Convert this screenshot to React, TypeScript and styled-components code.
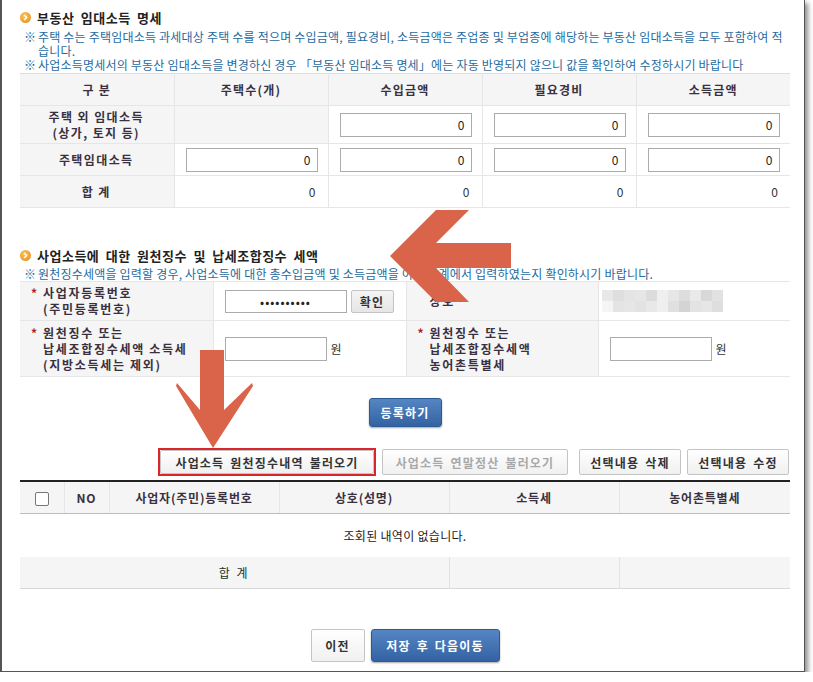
import { FC } from "react";
import styled, { createGlobalStyle } from "styled-components";

const GlobalStyle = createGlobalStyle`
  body {
    margin: 0;
    background: #ffffff;
    font-family: "Noto Sans CJK KR", "Noto Sans", sans-serif;
    font-size: 12px;
    color: #333;
  }
`;

const Window = styled.div`
  position: relative;
  width: 770px;
  height: 671px;
  padding: 0 14px 0 18px;
  background: #fff;
  border: 1px solid #555;
  border-left-width: 2px;
  border-top: none;
  box-shadow: 3px 3px 5px rgba(0, 0, 0, 0.45);
`;

const Section = styled.section<{ top: number }>`
  padding-top: ${(p) => p.top}px;
`;

const Title = styled.h3`
  display: flex;
  align-items: center;
  gap: 6px;
  margin: 0;
  height: 18px;
  font-size: 13px;
  font-weight: 700;
  color: #222;
  letter-spacing: 0.5px;
  word-spacing: 3px;
`;

const Bullet = styled.span`
  display: inline-flex;
  align-items: center;
  justify-content: center;
  width: 11px;
  height: 11px;
  border-radius: 50%;
  background: radial-gradient(circle at 40% 35%, #ffc35a, #e8870f);
`;

const Notes = styled.div<{ top?: number }>`
  margin-top: ${(p) => p.top ?? 4}px;
  padding-left: 4px;
`;

const Note = styled.p`
  display: flex;
  margin: 0;
  font-size: 12px;
  line-height: 14px;
  color: #1f6a9e;
  letter-spacing: 0.2px;
  word-break: break-all;
`;

const Mark = styled.span`
  flex: none;
  width: 14px;
  letter-spacing: 0;
`;

const Grid = styled.table<{ top?: number }>`
  width: 770px;
  margin-top: ${(p) => p.top ?? 0}px;
  border-collapse: collapse;
  table-layout: fixed;
  border-top: 1px solid #dcdcdc;
  border-bottom: 1px solid #c8c8c8;
`;

const Th = styled.th`
  height: 31px;
  padding: 0;
  background: #f5f5f5;
  border: 1px solid #e6e6e6;
  border-top: none;
  font-size: 12px;
  font-weight: 700;
  line-height: 15px;
  color: #3a3040;
  letter-spacing: 1.2px;
  &:first-child { border-left: none; }
  &:last-child { border-right: none; }
`;

const Td = styled.td<{ gray?: boolean; h?: number; align?: string }>`
  height: ${(p) => p.h ?? 31}px;
  padding: 0 12px 0 11px;
  background: ${(p) => (p.gray ? "#f5f5f5" : "#fff")};
  border: 1px solid #e6e6e6;
  text-align: ${(p) => p.align ?? "center"};
  vertical-align: middle;
  font-size: 12px;
  line-height: 15px;
  &:first-child { border-left: none; }
  &:last-child { border-right: none; }
`;

const RowLabel = styled.span`
  font-weight: 700;
  color: #3a3040;
  letter-spacing: 1.4px;
  line-height: 16px;
`;

const NumInput = styled.input<{ w: number; h?: number }>`
  box-sizing: border-box;
  width: ${(p) => p.w}px;
  height: ${(p) => p.h ?? 24}px;
  padding: 0 6px;
  border: 1px solid #ababab;
  font-family: inherit;
  font-size: 12px;
  text-align: right;
  color: #222;
  outline: none;
`;

const SsnInput = styled(NumInput)`
  text-align: center;
  letter-spacing: 1px;
`;

const FormLabel = styled.div`
  display: flex;
  gap: 5px;
  font-weight: 700;
  color: #3a3040;
  line-height: 16px;
  letter-spacing: 1.7px;
  text-align: left;
`;

const Star = styled.span<{ $hidden?: boolean }>`
  flex: none;
  width: 7px;
  color: #b0202a;
  visibility: ${(p) => (p.$hidden ? "hidden" : "visible")};
`;

const InputRow = styled.div`
  display: flex;
  align-items: center;
  gap: 4px;
  color: #333;
`;

const Blur = styled.div`
  margin-left: -8px;
  display: flex;
`;

const Button = styled.button<{ w: number; h?: number }>`
  box-sizing: border-box;
  width: ${(p) => p.w}px;
  height: ${(p) => p.h ?? 26}px;
  padding: 0;
  border: 1px solid #c4c4c4;
  border-radius: 2px;
  background: linear-gradient(#ffffff, #f0f0f0);
  font-family: inherit;
  font-size: 12px;
  font-weight: 700;
  color: ${(p) => (p.disabled ? "#a8a8a8" : "#333")};
  letter-spacing: 1.2px;
  word-spacing: 2px;
  white-space: nowrap;
  cursor: pointer;
`;

const BlueButton = styled.button<{ w: number; h: number }>`
  box-sizing: border-box;
  width: ${(p) => p.w}px;
  height: ${(p) => p.h}px;
  border: 1px solid #2c5a93;
  border-radius: 3px;
  background: linear-gradient(#5685c4, #3463a3);
  box-shadow: 0 1px 2px rgba(0, 0, 0, 0.35);
  font-family: inherit;
  font-size: 12px;
  font-weight: 700;
  color: #fff;
  letter-spacing: 1.2px;
  word-spacing: 2px;
  cursor: pointer;
`;

const SmallButton = styled(Button)`
  background: linear-gradient(#f4f4f4, #e6e6e6);
`;

const Highlight = styled.span`
  display: inline-flex;
  border: 2px solid #d9262c;
`;

const Center = styled.div<{ top: number }>`
  display: flex;
  justify-content: center;
  gap: 6px;
  padding-top: ${(p) => p.top}px;
`;

const Toolbar = styled.div`
  display: flex;
  justify-content: flex-end;
  align-items: center;
  gap: 6px;
  padding: 21px 1px 0 0;
  height: 28px;
  & > :nth-child(3) { margin-left: 5px; }
`;

const ListTable = styled(Grid)`
  border-top: 2px solid #222;
  border-bottom: 1px solid #d8d8d8;
`;

const ListTh = styled(Th)`
  border-bottom: 1px solid #bdbdbd;
  letter-spacing: 0.8px;
`;

const Checkbox = styled.span`
  display: inline-block;
  width: 12px;
  height: 12px;
  border: 1px solid #777;
  border-radius: 2px;
  background: #fff;
  vertical-align: middle;
`;

const Empty = styled.td`
  height: 43px;
  padding: 0;
  text-align: center;
  font-size: 12px;
  line-height: 15px;
  color: #222;
  letter-spacing: 0.3px;
`;

const TotalTd = styled.td`
  height: 31px;
  padding: 0;
  background: #f5f5f5;
  border-left: 1px solid #e2e2e2;
  text-align: center;
  line-height: 15px;
  color: #223322;
  letter-spacing: 2px;
  &:first-child { border-left: none; }
`;

const Overlay = styled.svg`
  position: absolute;
  left: -2px;
  top: 0;
  pointer-events: none;
`;

const blurCells = [
  "#e8e8e8", "#dedede", "#e4e4e4", "#e6e6e6", "#dcdcdc", "#efefef", "#e6e6e6", "#dddddd", "#e9e9e9", "#d8d8d8", "#e2e2e2",
  "#f5f5f5", "#e4e4e4", "#e6e6e6", "#e2e2e2", "#e8e8e8", "#efefef", "#e0e0e0", "#d4d4d4", "#e3e3e3", "#e6e6e6", "#dedede",
];

const BlurredName: FC = () => (
  <svg width="121" height="22" viewBox="0 0 121 22">
    {blurCells.map((c, i) => (
      <rect key={i} x={(i % 11) * 11} y={Math.floor(i / 11) * 11} width="11" height="11" fill={c} />
    ))}
  </svg>
);

const Chevron: FC = () => (
  <svg width="11" height="11" viewBox="0 0 11 11">
    <path d="M4.2 3 L6.6 5.5 L4.2 8" fill="none" stroke="#fff" strokeWidth="1.6" />
  </svg>
);

const App: FC = () => {
  return (
    <>
      <GlobalStyle />
      <Window>
        <Section top={8}>
          <Title>
            <Bullet>
              <Chevron />
            </Bullet>
            부동산 임대소득 명세
          </Title>
          <Notes>
            <Note>
              <Mark>※</Mark>
              <span>
                주택 수는 주택임대소득 과세대상 주택 수를 적으며 수입금액, 필요경비, 소득금액은 주업종 및
                부업종에 해당하는 부동산 임대소득을 모두 포함하여 적습니다.
              </span>
            </Note>
            <Note>
              <Mark>※</Mark>
              <span>
                사업소득명세서의 부동산 임대소득을 변경하신 경우 「부동산 임대소득 명세」에는 자동 반영되지
                않으니 값을 확인하여 수정하시기 바랍니다
              </span>
            </Note>
          </Notes>
          <Grid top={1}>
            <thead>
              <tr>
                <Th>구 분</Th>
                <Th>주택수(개)</Th>
                <Th>수입금액</Th>
                <Th>필요경비</Th>
                <Th>소득금액</Th>
              </tr>
            </thead>
            <tbody>
              <tr>
                <Td gray h={37}>
                  <RowLabel>
                    주택 외 임대소득
                    <br />
                    (상가, 토지 등)
                  </RowLabel>
                </Td>
                <Td gray h={37} />
                <Td h={37}><NumInput w={132} defaultValue="0" /></Td>
                <Td h={37}><NumInput w={132} defaultValue="0" /></Td>
                <Td h={37}><NumInput w={132} defaultValue="0" /></Td>
              </tr>
              <tr>
                <Td gray><RowLabel>주택임대소득</RowLabel></Td>
                <Td><NumInput w={132} defaultValue="0" /></Td>
                <Td><NumInput w={132} defaultValue="0" /></Td>
                <Td><NumInput w={132} defaultValue="0" /></Td>
                <Td><NumInput w={132} defaultValue="0" /></Td>
              </tr>
              <tr>
                <Td gray><RowLabel>합 계</RowLabel></Td>
                <Td align="right">0</Td>
                <Td align="right">0</Td>
                <Td align="right">0</Td>
                <Td align="right">0</Td>
              </tr>
            </tbody>
          </Grid>
        </Section>

        <Section top={38}>
          <Title>
            <Bullet>
              <Chevron />
            </Bullet>
            사업소득에 대한 원천징수 및 납세조합징수 세액
          </Title>
          <Notes top={3}>
            <Note>
              <Mark>※</Mark>
              <span>
                원천징수세액을 입력할 경우, 사업소득에 대한 총수입금액 및 소득금액을 이전 단계에서 입력하였는지
                확인하시기 바랍니다.
              </span>
            </Note>
          </Notes>
          <Grid>
            <colgroup>
              <col style={{ width: 193 }} />
              <col style={{ width: 193 }} />
              <col style={{ width: 192 }} />
              <col style={{ width: 192 }} />
            </colgroup>
            <tbody>
              <tr>
                <Td gray h={38}>
                  <FormLabel>
                    <Star>*</Star>
                    <span>
                      사업자등록번호
                      <br />
                      (주민등록번호)
                    </span>
                  </FormLabel>
                </Td>
                <Td h={38}>
                  <InputRow>
                    <SsnInput w={122} h={23} type="password" defaultValue="1234567890" />
                    <SmallButton w={47} h={23}>확인</SmallButton>
                  </InputRow>
                </Td>
                <Td gray h={38}>
                  <FormLabel>
                    <Star $hidden>*</Star>
                    <span>상호</span>
                  </FormLabel>
                </Td>
                <Td h={38} align="left">
                  <Blur>
                    <BlurredName />
                  </Blur>
                </Td>
              </tr>
              <tr>
                <Td gray h={55}>
                  <FormLabel>
                    <Star>*</Star>
                    <span>
                      원천징수 또는
                      <br />
                      납세조합징수세액 소득세
                      <br />
                      (지방소득세는 제외)
                    </span>
                  </FormLabel>
                </Td>
                <Td h={55}>
                  <InputRow>
                    <NumInput w={102} />원
                  </InputRow>
                </Td>
                <Td gray h={55}>
                  <FormLabel>
                    <Star>*</Star>
                    <span>
                      원천징수 또는
                      <br />
                      납세조합징수세액
                      <br />
                      농어촌특별세
                    </span>
                  </FormLabel>
                </Td>
                <Td h={55}>
                  <InputRow>
                    <NumInput w={102} />원
                  </InputRow>
                </Td>
              </tr>
            </tbody>
          </Grid>
        </Section>

        <Center top={21}>
          <BlueButton w={73} h={29}>등록하기</BlueButton>
        </Center>

        <Toolbar>
          <Highlight>
            <Button w={214} h={24}>사업소득 원천징수내역 불러오기</Button>
          </Highlight>
          <Button w={186} disabled>사업소득 연말정산 불러오기</Button>
          <Button w={102}>선택내용 삭제</Button>
          <Button w={102}>선택내용 수정</Button>
        </Toolbar>

        <ListTable top={4}>
          <colgroup>
            <col style={{ width: 44 }} />
            <col style={{ width: 45 }} />
            <col style={{ width: 170 }} />
            <col style={{ width: 170 }} />
            <col style={{ width: 170 }} />
            <col style={{ width: 171 }} />
          </colgroup>
          <thead>
            <tr>
              <ListTh><Checkbox /></ListTh>
              <ListTh>NO</ListTh>
              <ListTh>사업자(주민)등록번호</ListTh>
              <ListTh>상호(성명)</ListTh>
              <ListTh>소득세</ListTh>
              <ListTh>농어촌특별세</ListTh>
            </tr>
          </thead>
          <tbody>
            <tr>
              <Empty colSpan={6}>조회된 내역이 없습니다.</Empty>
            </tr>
            <tr>
              <TotalTd colSpan={4}>합 계</TotalTd>
              <TotalTd />
              <TotalTd />
            </tr>
          </tbody>
        </ListTable>

        <Center top={40}>
          <Button w={54} h={33}>이전</Button>
          <BlueButton w={129} h={33}>저장 후 다음이동</BlueButton>
        </Center>

        <Overlay width="813" height="682" viewBox="0 0 813 682">
          <polygon
            fill="#d9644a"
            points="390,256 436,210 469,210 436,243 511,243 511,268 436,268 469,302 436,302"
          />
          <polygon
            fill="#d9644a"
            points="200,350 224,350 224,410 252,383 253,386 213,448 176,386 177,383 200,410"
          />
        </Overlay>
      </Window>
    </>
  );
};

export default App;
